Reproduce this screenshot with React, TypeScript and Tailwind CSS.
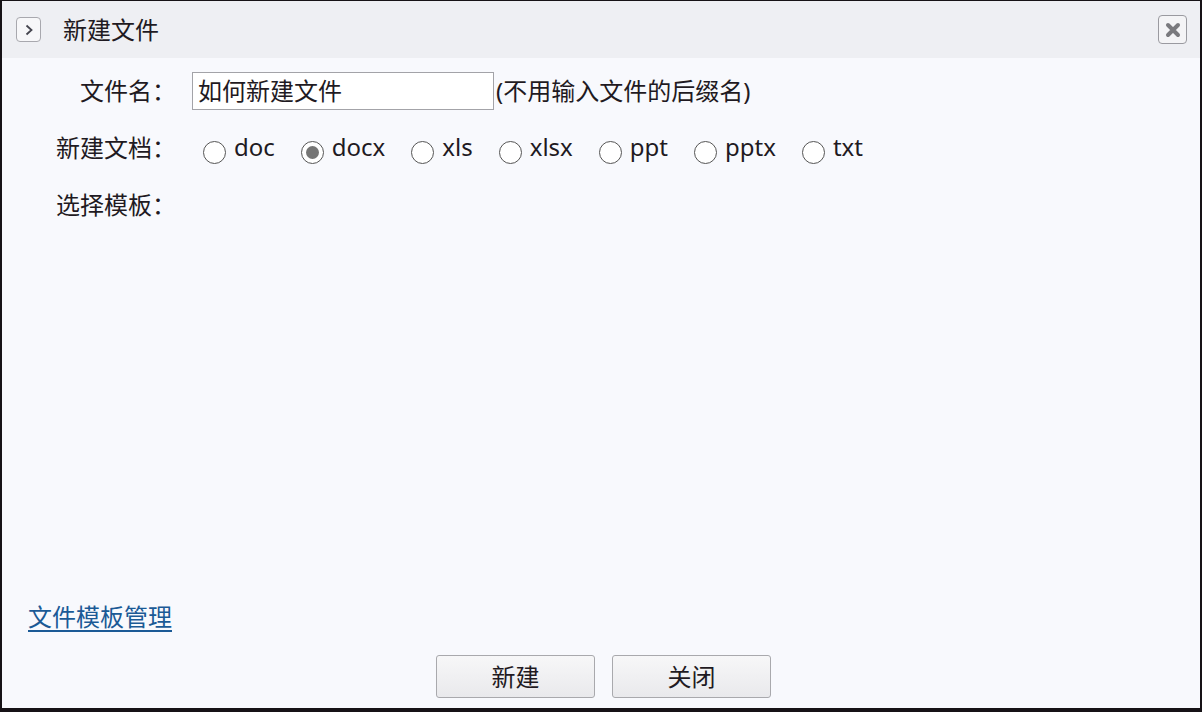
import React from 'react';

const exts = ['doc', 'docx', 'xls', 'xlsx', 'ppt', 'pptx', 'txt'];

function Radio({ checked }: { checked?: boolean }) {
  return (
    <span className="mt-[8px] flex h-[23px] w-[23px] shrink-0 items-center justify-center rounded-full border border-[#555] bg-white">
      {checked && <span className="h-[13px] w-[13px] rounded-full bg-[#757575]" />}
    </span>
  );
}

function Label({ children }: { children: React.ReactNode }) {
  return <div className="w-[120px] shrink-0 text-right">{children}</div>;
}

export default function App() {
  return (
    <div className="flex h-[712px] w-[1202px] flex-col border-t border-r-2 border-b-4 border-l-2 border-[#161216] bg-[#f8f9fd] font-['Noto_Sans','Noto_Sans_CJK_SC',sans-serif] text-[24px] leading-none text-[#1f1a22]">
      {/* header */}
      <div className="flex h-[57px] shrink-0 items-center bg-[#eeeff3] pl-[14px] pr-[13px]">
        <div className="flex h-[25px] w-[25px] items-center justify-center rounded-[4px] border border-[#a8a8ae] bg-[#f7f7f9]">
          <svg width="12" height="14" viewBox="0 0 12 14">
            <path d="M3.5 2.5 L8.5 7 L3.5 11.5" fill="none" stroke="#45454f" strokeWidth="1.8" />
          </svg>
        </div>
        <div className="ml-[22px]">新建文件</div>
        <div className="ml-auto flex h-[29px] w-[29px] items-center justify-center rounded-[4px] border border-[#9a9aa0] bg-[#f4f4f6]">
          <svg width="18" height="18" viewBox="0 0 18 18">
            <path d="M4 4 L14 14 M14 4 L4 14" stroke="#7a7a7e" strokeWidth="4" strokeLinecap="round" />
          </svg>
        </div>
      </div>

      {/* body */}
      <div className="flex flex-1 flex-col pt-[14px]">
        <div className="flex flex-col gap-[19px] pl-[54px]">
          <div className="flex h-[38px] items-center">
            <Label>文件名：</Label>
            <div className="ml-[16px] flex h-[38px] w-[302px] items-center border border-[#a3a3a8] bg-white pl-[5px]">
              如何新建文件
            </div>
            <span className="ml-[2px]">(不用输入文件的后缀名)</span>
          </div>
          <div className="flex h-[38px] items-center">
            <Label>新建文档：</Label>
            <div className="ml-[27px] flex items-center gap-[26px]">
              {exts.map((e) => (
                <label key={e} className="flex items-center gap-[8px]">
                  <Radio checked={e === 'docx'} />
                  <span className="-mt-[3px]">{e}</span>
                </label>
              ))}
            </div>
          </div>
          <div className="flex h-[38px] items-center">
            <Label>选择模板：</Label>
          </div>
        </div>

        <div className="mt-auto pl-[26px]">
          <a className="text-[#1b5a96] underline decoration-2 underline-offset-[4px]">文件模板管理</a>
        </div>
        <div className="mt-[26px] mb-[10px] ml-[5px] flex justify-center gap-[17px]">
          <button className="h-[43px] w-[159px] rounded-[3px] border border-[#a9a9ad] bg-gradient-to-b from-[#f7f7f8] to-[#e9e9ec]">
            新建
          </button>
          <button className="h-[43px] w-[159px] rounded-[3px] border border-[#a9a9ad] bg-gradient-to-b from-[#f7f7f8] to-[#e9e9ec]">
            关闭
          </button>
        </div>
      </div>
    </div>
  );
}
